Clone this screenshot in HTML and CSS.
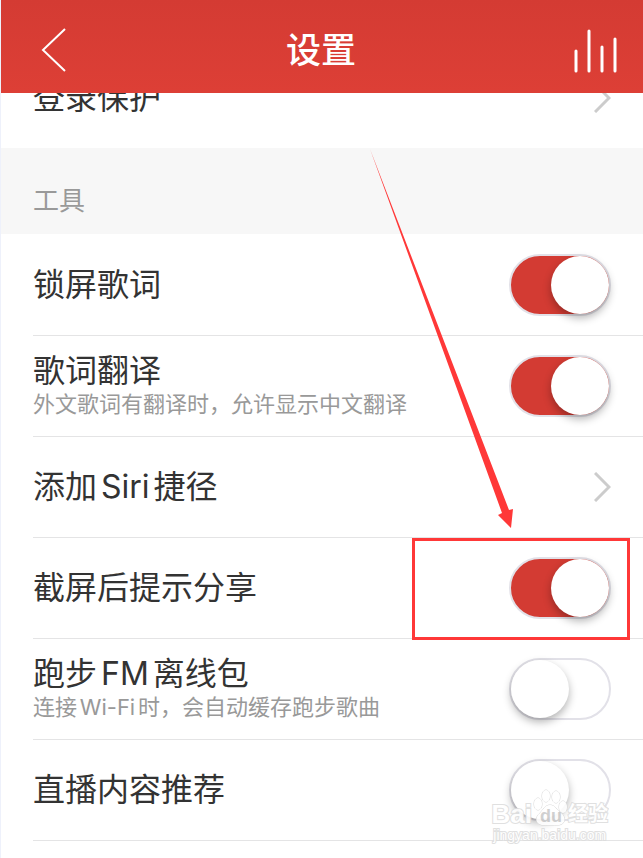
FILE: index.html
```html
<!DOCTYPE html>
<html lang="zh-CN">
<head>
    <meta charset="UTF-8" />
    <meta name="viewport" content="width=device-width, initial-scale=1" />
    <title>设置</title>
    <link rel="stylesheet" href="styles.css">
</head>
<body>
<header class="navbar">
    <button type="button" class="nav-button" aria-label="返回">
        <svg width="26" height="46" viewBox="0 0 26 46" fill="none" stroke="#fff" stroke-width="2">
            <path d="M24 2 L2 23 L24 44" />
        </svg>
    </button>
    <h1>设置</h1>
    <button type="button" class="nav-button" aria-label="正在播放">
        <svg width="44" height="46" viewBox="0 0 44 46" fill="none" stroke="#fff" stroke-width="3" stroke-linecap="round">
            <path d="M3 24V44 M16 4V44 M29 20V44 M42 12V44" />
        </svg>
    </button>
</header>

<main>
    <a href="#" class="row row-link row-scrolled">
        <span class="row-title">登录保护</span>
        <svg class="chevron" width="17" height="30" viewBox="0 0 17 30"><path d="M1 1 L15 15 L1 29" /></svg>
    </a>

    <h2>工具</h2>

    <div class="list">
        <div class="row">
            <label class="row-text" for="lockLyrics">
                <span class="row-title">锁屏歌词</span>
            </label>
            <input type="checkbox" class="switch" id="lockLyrics" checked />
        </div>

        <div class="row">
            <label class="row-text" for="translate">
                <span class="row-title">歌词翻译</span>
                <span class="row-note">外文歌词有翻译时，允许显示中文翻译</span>
            </label>
            <input type="checkbox" class="switch" id="translate" checked />
        </div>

        <a href="#" class="row row-link">
            <span class="row-title">添加Siri捷径</span>
            <svg class="chevron" width="17" height="30" viewBox="0 0 17 30"><path d="M1 1 L15 15 L1 29" /></svg>
        </a>

        <div class="row">
            <label class="row-text" for="shareTip">
                <span class="row-title">截屏后提示分享</span>
            </label>
            <input type="checkbox" class="switch" id="shareTip" checked />
            <span class="highlight"></span>
        </div>

        <div class="row">
            <label class="row-text" for="runFm">
                <span class="row-title">跑步FM离线包</span>
                <span class="row-note">连接Wi-Fi时，会自动缓存跑步歌曲</span>
            </label>
            <input type="checkbox" class="switch" id="runFm" />
        </div>

        <div class="row">
            <label class="row-text" for="live">
                <span class="row-title">直播内容推荐</span>
            </label>
            <input type="checkbox" class="switch" id="live" />
            <div class="watermark">
                <div class="watermark-name">
                    <span>Bai</span>
                    <span class="paw">
                        <svg width="36" height="38" viewBox="0 0 36 38">
                            <ellipse cx="6" cy="16" rx="4" ry="6" />
                            <ellipse cx="14" cy="8" rx="4" ry="6" />
                            <ellipse cx="24" cy="9" rx="4" ry="6" />
                            <ellipse cx="31" cy="19" rx="4" ry="6" />
                            <path d="M18 17C13 17 11 22 8 25C3 29 3 36 10 37C15 37 21 37 27 37C34 36 34 29 29 25C25 22 23 17 18 17Z" />
                        </svg>
                        <span class="paw-text">du</span>
                    </span>
                    <span class="watermark-cn">经验</span>
                </div>
                <div class="watermark-url">jingyan.baidu.com</div>
            </div>
        </div>
    </div>

    <svg class="arrow" width="143" height="379" viewBox="0 0 143 379">
        <path d="M0 0 L139 361 L143 360 L141 379 L128 366 L132 364 Z" />
    </svg>
</main>
</body>
</html>
```

FILE: styles.css
```css
:root {
    --red: #d33b33;
    --mark: #ff3838;
    --line: #e4e4e5;
    --side: 32px;
}

* {
    box-sizing: border-box;
}

body {
    font-family: Inter, "Noto Sans CJK SC", sans-serif;
    text-autospace: normal;
    background-color: #fff;
    color: #333;
    margin: 0;
    min-height: 100vh;
    border-left: 1px solid #eef1fb;
}

.navbar {
    position: sticky;
    top: 0;
    z-index: 2;
    display: grid;
    grid-template-columns: 1fr auto 1fr;
    align-items: center;
    height: 93px;
    padding: 7px 26px 0 40px;
    background: linear-gradient(#d43b33, #dd3f36);
}

h1 {
    margin: 0;
    padding-right: 16px;
    font-size: 35px;
    line-height: 48px;
    font-weight: 500;
    color: #fff;
}

.nav-button {
    display: flex;
    padding: 0;
    border: none;
    background: none;
    cursor: pointer;
}

.nav-button:last-child {
    justify-self: end;
}

main {
    display: flow-root;
    position: relative;
}

h2 {
    margin: 0;
    padding: 37px var(--side) 17px;
    background-color: #f7f7f7;
    color: #999;
    font-size: 26px;
    line-height: 32px;
    font-weight: 400;
}

.list {
    padding-top: 1px;
}

.row {
    position: relative;
    display: flex;
    justify-content: space-between;
    align-items: center;
    min-height: 101px;
    margin-left: var(--side);
    padding-right: var(--side);
    border-bottom: 1px solid var(--line);
}

.row-link {
    color: inherit;
    text-decoration: none;
}

/* partly under the navbar */
.row-scrolled {
    margin-top: -46px;
    border-bottom: none;
}

.row-text {
    display: flex;
    flex-direction: column;
}

.row-title {
    font-size: 32px;
    line-height: 36px;
}

.row-note {
    font-size: 22px;
    line-height: 30px;
    color: #999;
    text-spacing-trim: space-all;
}

.chevron {
    fill: none;
    stroke: #ccc;
    stroke-width: 3;
}

.switch {
    appearance: none;
    width: 102px;
    height: 62px;
    margin: 0;
    border: 2px solid #e2e1e8;
    border-radius: 31px;
    background-color: #fff;
    cursor: pointer;
}

.switch::before {
    content: "";
    display: block;
    width: 58px;
    height: 58px;
    border-radius: 50%;
    background-color: #fff;
    box-shadow: 0 4px 8px rgba(0, 0, 0, 0.3);
}

.switch:checked {
    background-color: var(--red);
}

.switch:checked::before {
    margin-left: auto;
}

.highlight {
    position: absolute;
    top: 0;
    right: 13px;
    width: 218px;
    height: 102px;
    border: 3px solid var(--mark);
    pointer-events: none;
}

.arrow {
    position: absolute;
    top: 56px;
    right: 130px;
    fill: var(--mark);
    pointer-events: none;
}

.watermark {
    position: absolute;
    right: 35px;
    bottom: -4px;
    color: #fff;
    font-family: "Liberation Sans", "Noto Sans CJK SC", sans-serif;
    -webkit-text-stroke: 2px #ddd;
    paint-order: stroke fill;
    opacity: 0.9;
    pointer-events: none;
}

.watermark-name {
    display: flex;
    align-items: flex-end;
    font-size: 26px;
    line-height: 24px;
    font-weight: 700;
}

.paw {
    position: relative;
    display: flex;
}

.paw svg {
    fill: #fff;
    stroke: #d4d4d4;
}

.paw-text {
    position: absolute;
    left: 8px;
    bottom: 0;
    font-size: 18px;
    line-height: 20px;
    color: #ccc;
    -webkit-text-stroke: 0;
}

.watermark-cn {
    font-size: 20px;
}

.watermark-url {
    font-size: 14px;
    line-height: 18px;
    text-align: center;
}
```
